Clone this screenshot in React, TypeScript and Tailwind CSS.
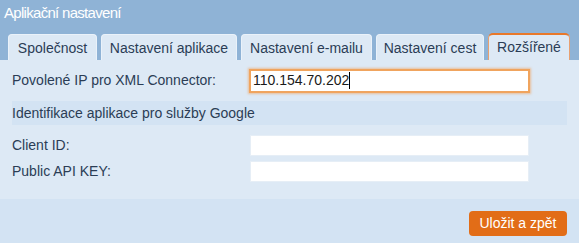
import React from "react";

const tabs = [
  { label: "Společnost", w: "w-[89px]" },
  { label: "Nastavení aplikace", w: "w-[136px]" },
  { label: "Nastavení e-mailu", w: "w-[131px]" },
  { label: "Nastavení cest", w: "w-[108px]" },
];

export default function App() {
  return (
    <div className="w-[579px] h-[243px] bg-[#d3e3f3] font-['Liberation_Sans',Arial,sans-serif] text-[#2b3d55] text-[14px] flex flex-col">
      {/* Header + tabs */}
      <div className="bg-[#8fb3d6] h-[60px] flex flex-col">
        <div className="h-[34px] pl-[4px] pt-[4px] text-white text-[15px] tracking-[-0.7px] leading-[18px]">Aplikační nastavení</div>
        <div className="flex items-end gap-[4px] pl-[8px] h-[26px]">
          {tabs.map((t) => (
            <div
              key={t.label}
              className={`${t.w} h-[26px] bg-[#dde9f5] rounded-t-[4px] border-t border-x border-[#eaf2fa] flex items-center justify-center pt-[1px]`}
            >
              {t.label}
            </div>
          ))}
          <div className="w-[82px] h-[27px] bg-[#dde9f5] rounded-t-[5px] border-t-2 border-x border-[#e8782a] border-x-[#e8a070] flex items-center justify-center">
            Rozšířené
          </div>
        </div>
      </div>

      {/* Content */}
      <div className="bg-[#dde9f5] h-[139px] pl-[12px] pr-[12px] flex flex-col">
        <div className="flex items-center h-[41px]">
          <span className="w-[237px]">Povolené IP pro XML Connector:</span>
          <div className="w-[281px] h-[24px] bg-white border-2 border-[#f0a45e] shadow-[0_0_2px_1px_rgba(240,164,94,0.6)] flex items-center pl-[2px] text-[#1a1a1a] text-[14px]">
            110.154.70.202<span className="w-px h-[17px] bg-black" />
          </div>
        </div>
        <div className="h-[24px] bg-[#d3e3f3] flex items-center">Identifikace aplikace pro služby Google</div>
        <div className="flex items-center h-[23px] mt-[9px]">
          <span className="w-[238px]">Client ID:</span>
          <div className="w-[279px] h-[21px] bg-white border border-[#e6eef6]" />
        </div>
        <div className="flex items-center h-[23px] mt-[3px]">
          <span className="w-[238px]">Public API KEY:</span>
          <div className="w-[279px] h-[21px] bg-white border border-[#e6eef6]" />
        </div>
      </div>

      {/* Footer */}
      <div className="flex-1 flex items-start justify-end pr-[12px] pt-[12px]">
        <button className="w-[98px] h-[25px] bg-[#e26d17] rounded-[4px] text-white text-[14px] flex items-center justify-center">
          Uložit a zpět
        </button>
      </div>
    </div>
  );
}
